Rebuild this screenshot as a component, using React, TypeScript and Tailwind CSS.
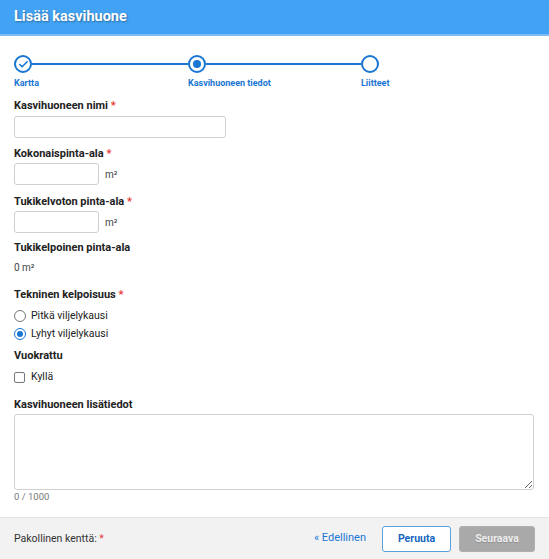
import { Check } from "lucide-react";

const font = { fontFamily: "Roboto, 'Liberation Sans', sans-serif" };

function Req() {
  return <span className="text-[#e53935]"> *</span>;
}

function Label({ children, req, className = "" }: { children: React.ReactNode; req?: boolean; className?: string }) {
  return (
    <div className={`text-[11px] font-bold leading-[14px] text-[#222] ${className}`}>
      {children}
      {req && <Req />}
    </div>
  );
}

function Step({ state, label, line, width }: { state: "done" | "active" | "todo"; label: string; line?: boolean; width: string }) {
  return (
    <div className={`flex flex-col ${width}`}>
      <div className="flex items-center">
        <div className="flex size-[18px] shrink-0 items-center justify-center rounded-full border-2 border-[#1976d2] bg-white">
          {state === "done" && <Check className="size-[11px] text-[#1976d2]" strokeWidth={3.5} />}
          {state === "active" && <div className="size-[8px] rounded-full bg-[#1976d2]" />}
        </div>
        {line && <div className="h-[2px] flex-1 bg-[#1976d2]" />}
      </div>
      <div className="mt-[5px] whitespace-nowrap text-[9px] font-bold leading-[11px] text-[#1976d2]">{label}</div>
    </div>
  );
}

function AreaInput() {
  return (
    <div className="mt-[2px] flex items-center">
      <input className="h-[22px] w-[85px] rounded-[3px] border border-[#d0d0d0] outline-none" />
      <span className="ml-[6px] text-[10px] text-[#444]">m²</span>
    </div>
  );
}

export default function App() {
  return (
    <div className="flex h-[559px] w-[549px] flex-col bg-white" style={font}>
      <div className="flex h-[36px] shrink-0 items-center border-b-2 border-[#7dbdf5] bg-[#42a3f4] px-[14px]">
        <h1
          className="text-[14.5px] font-bold text-white"
          style={{ textShadow: "1px 1px 2px rgba(0,0,0,0.35)" }}
        >
          Lisää kasvihuone
        </h1>
      </div>

      <div className="flex-1 px-[14px]">
        <div className="mt-[19px] flex items-start">
          <Step state="done" label="Kartta" line width="w-[174px]" />
          <Step state="active" label="Kasvihuoneen tiedot" line width="w-[173px]" />
          <Step state="todo" label="Liitteet" width="w-auto" />
        </div>

        <Label req className="mt-[10px]">Kasvihuoneen nimi</Label>
        <input className="mt-[3px] block h-[22px] w-[212px] rounded-[3px] border border-[#d0d0d0] outline-none" />

        <Label req className="mt-[9px]">Kokonaispinta-ala</Label>
        <AreaInput />

        <Label req className="mt-[10px]">Tukikelvoton pinta-ala</Label>
        <AreaInput />

        <Label className="mt-[8px]">Tukikelpoinen pinta-ala</Label>
        <div className="mt-[6px] text-[10px] leading-[14px] text-[#444]">0 m²</div>

        <Label req className="mt-[13px]">Tekninen kelpoisuus</Label>
        <div className="mt-[5px] flex flex-col">
          <label className="flex h-[18px] items-center gap-[5px] text-[10.5px] text-[#222]">
            <span className="size-[12px] rounded-full border border-[#777] bg-white" />
            Pitkä viljelykausi
          </label>
          <label className="flex h-[18px] items-center gap-[5px] text-[10.5px] text-[#222]">
            <span className="flex size-[12px] items-center justify-center rounded-full border border-[#1976d2] bg-white">
              <span className="size-[6px] rounded-full bg-[#1976d2]" />
            </span>
            Lyhyt viljelykausi
          </label>
        </div>

        <Label className="mt-[6px]">Vuokrattu</Label>
        <label className="mt-[6px] flex h-[16px] items-center gap-[6px] text-[10.5px] text-[#222]">
          <span className="size-[11px] rounded-[2px] border border-[#777] bg-white" />
          Kyllä
        </label>

        <Label className="mt-[13px]">Kasvihuoneen lisätiedot</Label>
        <textarea className="mt-[2px] block h-[76px] w-[520px] resize rounded-[3px] border border-[#d0d0d0] outline-none" />
        <div className="mt-[1px] text-[9.5px] leading-[12px] text-[#777]">0 / 1000</div>
      </div>

      <div className="flex h-[42px] shrink-0 items-center border-t border-[#e6e6e6] bg-[#f2f2f2] pl-[14px] pr-[14px]">
        <div className="text-[10.5px] text-[#333]">
          Pakollinen kenttä:
          <Req />
        </div>
        <div className="ml-auto flex items-center">
          <span className="text-[11px] text-[#1976d2]">« Edellinen</span>
          <button className="ml-[16px] h-[26px] w-[69px] rounded-[3px] border border-[#5a9fe0] bg-white text-[10.5px] font-bold text-[#1565c0]">
            Peruuta
          </button>
          <button
            className="ml-[8px] h-[26px] w-[76px] rounded-[3px] border border-[#b0b0b0] bg-[#a9a9a9] text-[10.5px] font-bold text-[#ececec]"
            style={{ textShadow: "0 1px 1px rgba(0,0,0,0.15)" }}
          >
            Seuraava
          </button>
        </div>
      </div>
    </div>
  );
}
